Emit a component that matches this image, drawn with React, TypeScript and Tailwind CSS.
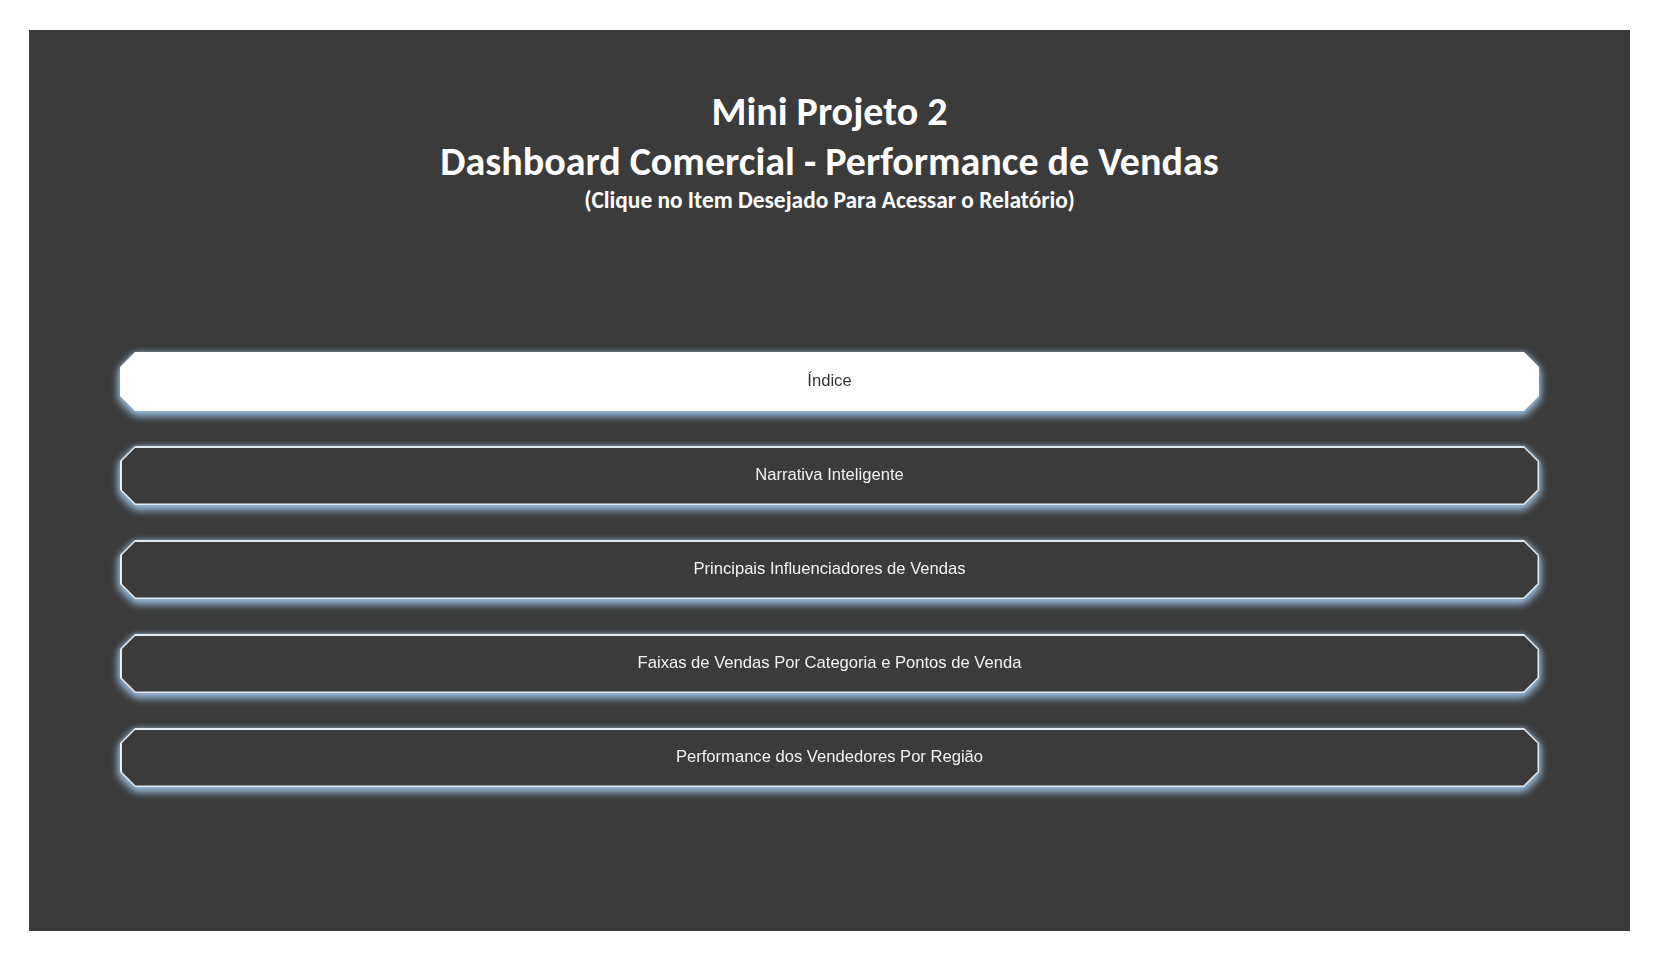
import React from "react";

const chamfer =
  "[clip-path:polygon(15px_0,calc(100%-15px)_0,100%_15px,100%_calc(100%-15px),calc(100%-15px)_100%,15px_100%,0_calc(100%-15px),0_15px)]";

const items = [
  "Narrativa Inteligente",
  "Principais Influenciadores de Vendas",
  "Faixas de Vendas Por Categoria e Pontos de Venda",
  "Performance dos Vendedores Por Região",
];

const glow =
  "[filter:drop-shadow(0_3px_4px_rgba(150,185,215,1))_drop-shadow(0_1px_2px_rgba(150,185,215,0.8))]";

export default function App() {
  return (
    <div className="min-h-screen w-full bg-white pt-[30px] pl-[29px]">
      <div className="w-[1601px] h-[901px] bg-[#3b3b3b] flex flex-col">
        <div
          className="flex flex-col items-center text-white font-bold pt-[57px]"
          style={{ fontFamily: "Carlito, Calibri, 'Open Sans', sans-serif" }}
        >
          <div className="text-[40px] leading-[50px]">Mini Projeto 2</div>
          <div className="text-[40px] leading-[50px]">Dashboard Comercial - Performance de Vendas</div>
          <div className="text-[23.4px] leading-[26px]">(Clique no Item Desejado Para Acessar o Relatório)</div>
        </div>
        <div
          className="mt-[139px] px-[91px] flex flex-col gap-[35px]"
          style={{ fontFamily: "'Liberation Sans', Arial, sans-serif" }}
        >
          <div className={glow}>
            <div
              className={`h-[59px] bg-white flex items-center justify-center text-[16.6px] text-[#333333] ${chamfer}`}
            >
              Índice
            </div>
          </div>
          {items.map((t) => (
            <div key={t} className={glow}>
              <div className={`h-[59px] bg-[#e4ebf1] p-[1.5px] ${chamfer}`}>
                <div
                  className={`h-full bg-[#3b3b3b] flex items-center justify-center text-[16.6px] text-[#f2f2f2] [clip-path:polygon(14px_0,calc(100%-14px)_0,100%_14px,100%_calc(100%-14px),calc(100%-14px)_100%,14px_100%,0_calc(100%-14px),0_14px)]`}
                >
                  {t}
                </div>
              </div>
            </div>
          ))}
        </div>
      </div>
    </div>
  );
}
